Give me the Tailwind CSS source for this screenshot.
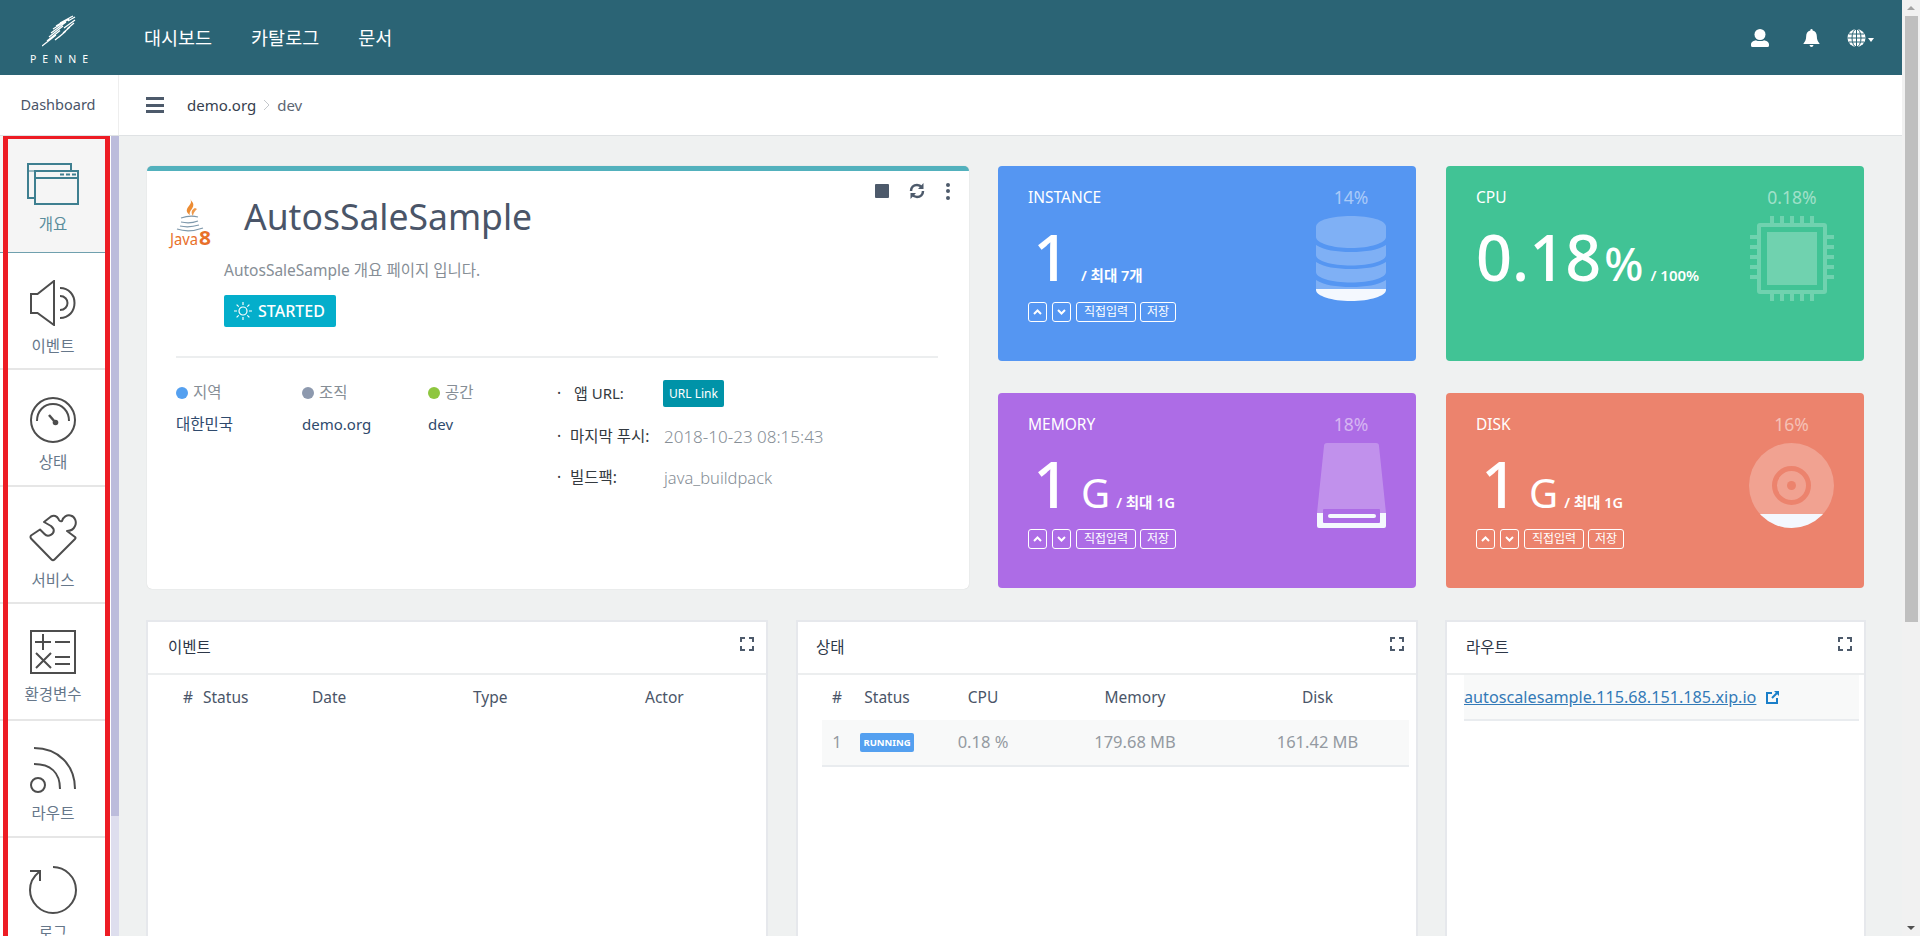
<!DOCTYPE html>
<html lang="ko">
<head>
  <meta charset="UTF-8" />
  <meta name="viewport" content="width=device-width, initial-scale=1.0"/>
  <title>PENNE Dashboard</title>
  <script src="https://cdn.jsdelivr.net/npm/@tailwindcss/browser@4"></script>
</head>
<body class="h-screen overflow-hidden flex bg-[#eff1f1] text-[#4a5568] font-['Noto_Sans','Noto_Sans_CJK_KR',sans-serif]">
  <div class="flex-1 min-w-0 flex flex-col">
    <!-- top nav -->
    <header class="h-[75px] shrink-0 bg-[#2b6475] text-white flex items-center">
      <div class="w-[118px] shrink-0 flex flex-col items-center pt-[3px]">
        <svg class="w-[34px] h-[32px]" viewBox="0 0 34 32" fill="none" stroke="#fff" stroke-width="1.300">
          <path d="M0 31L14 20M5 26L18 15.500M7 22L21 11M9 18L24 7M11 14L27 4M14 11L29 2M18 8L31 1M13 25L20 19.500M17 22L24 16M21 18L28 12M25 14L32 8M22 13L33 5M26 6L33 2"/>
        </svg>
        <span class="text-[10.500px] leading-[10px] tracking-[6px] mt-[7px] pl-[6px]">PENNE</span>
      </div>
      <nav class="flex gap-[39px] pl-[26px] text-[18.500px]">
        <a>대시보드</a>
        <a>카탈로그</a>
        <a>문서</a>
      </nav>
      <div class="ml-auto flex items-center pr-[28px]">
        <svg class="w-[18px] h-[18px] mr-[34px]" viewBox="0 0 18 18" fill="#fff"><circle cx="9" cy="5.500" r="5.500"/><path d="M0 15.500C0 12.500 3 11.500 5 11.200C7 12.400 11 12.400 13 11.200C15 11.500 18 12.500 18 15.500V16.500Q18 18 16.500 18H1.500Q0 18 0 16.500Z"/></svg>
        <svg class="w-[17px] h-[18px] mr-[27px]" viewBox="0 0 16 18" fill="#fff"><path d="M8 0Q9.200 0 9.200 1.400C12 2 13.300 4.200 13.300 7C13.300 11 14.500 12.500 16 14.500V15H0V14.500C1.500 12.500 2.700 11 2.700 7C2.700 4.200 4 2 6.800 1.400Q6.800 0 8 0Z"/><path d="M6 16H10Q9.600 18 8 18T6 16Z"/></svg>
        <svg class="w-[19px] h-[18px]" viewBox="0 0 18 18" fill="#fff" stroke="#2b6475" stroke-width="1"><circle cx="9" cy="9" r="9" stroke="none"/><path d="M9 0V18M0 9H18M1.500 5H16.500M1.500 13H16.500" fill="none"/><ellipse cx="9" cy="9" rx="4.500" ry="9" fill="none"/></svg>
        <span class="ml-[2px] mt-[5px] w-0 h-0 border-x-[3.500px] border-x-transparent border-t-[4px] border-t-white"></span>
      </div>
    </header>

    <!-- breadcrumb bar -->
    <div class="h-[61px] shrink-0 bg-white border-b border-[#dfe2e4] flex items-center text-[15px]">
      <div class="w-[119px] h-full shrink-0 border-r border-[#eeeeee] flex items-center justify-center pr-[2px] text-[14.500px]">Dashboard</div>
      <div class="ml-[27px] w-[18px] flex flex-col gap-[3.500px]">
        <span class="h-[3px] bg-[#4d5a6b]"></span>
        <span class="h-[3px] bg-[#4d5a6b]"></span>
        <span class="h-[3px] bg-[#4d5a6b]"></span>
      </div>
      <span class="ml-[23px] text-[#36404e]">demo.org</span>
      <svg class="w-[7px] h-[12px] mx-[7px]" viewBox="0 0 7 12" fill="none" stroke="#c4c8cc"><path d="M1 1L6 6L1 11"/></svg>
      <span class="text-[#5c6673]">dev</span>
    </div>

    <div class="flex-1 min-h-0 flex">
      <!-- side menu -->
      <aside class="relative w-[119px] shrink-0 bg-white flex overflow-hidden text-[15.500px] text-[#66778a]">
        <div class="w-[111px] shrink-0 pr-[5px]">
          <a class="h-[117px] flex flex-col items-center justify-start pt-[27px] bg-[#f5f5f5] border-b border-[#6fa0ae] text-[#5a8d9c]">
            <svg class="w-[52px] h-[42px]" viewBox="0 0 52 42" fill="#f5f5f5" stroke="#3e7f90" stroke-width="2">
              <path d="M1 1H44V35H1Z"/><path d="M1 8H44" stroke-width="1"/>
              <path d="M8 8H51V41H8Z"/><path d="M8 15H51"/>
              <path d="M33 11.500H37M39 11.500H43M45 11.500H49" stroke-width="2"/>
            </svg>
            <span class="mt-[9px] leading-[20px]">개요</span>
          </a>
          <a class="h-[117px] flex flex-col items-center pt-[27px] border-b-2 border-[#e6e6e6]">
            <svg class="w-[46px] h-[46px]" viewBox="0 0 46 46" fill="none" stroke="#4d4d4d" stroke-width="2"><path d="M1 14V33H7.500L24 45V1L7.500 14Z"/><path d="M30 16C35 16 37.500 19.500 37.500 23S35 30 30 30"/><path d="M30 8C39 8 44.500 15 44.500 23S39 38 30 38"/></svg>
            <span class="mt-[10px] leading-[20px]">이벤트</span>
          </a>
          <a class="h-[117px] flex flex-col items-center pt-[27px] border-b-2 border-[#e6e6e6]">
            <svg class="w-[46px] h-[46px]" viewBox="0 0 46 46" fill="none" stroke="#4d4d4d" stroke-width="2"><circle cx="23" cy="23" r="22"/><path d="M7 24C7 14 14 7 23 7S39 14 39 24"/><path d="M19 18L25 25" stroke-width="2.500"/><circle cx="25.500" cy="25.500" r="2.800" fill="#4d4d4d" stroke="none"/></svg>
            <span class="mt-[9px] leading-[20px]">상태</span>
          </a>
          <a class="h-[117px] flex flex-col items-center pt-[27px] border-b-2 border-[#e6e6e6]">
            <svg class="w-[48px] h-[48px]" viewBox="0 0 48 48" fill="none" stroke="#4d4d4d" stroke-width="2" stroke-linejoin="round"><path d="M2 21.500L11 15.500L15.500 20C19 24 26 20 24.500 15Q24 14 22 12L15 8L22 2.500C25 1 28 2 29.500 5Q30.500 8 33 7C34 3 38 .5 41.500 1.500C46 2.500 48 8 46 12C44.500 15.500 41 17 38 17L46 23Q47 24 46 25L25.500 45.500Q24 47 22.500 45.500L2 24.500Q1 23 2 21.500Z"/></svg>
            <span class="mt-[8px] leading-[20px]">서비스</span>
          </a>
          <a class="h-[117px] flex flex-col items-center pt-[26px] border-b-2 border-[#e6e6e6]">
            <svg class="w-[46px] h-[44px]" viewBox="0 0 46 44" fill="none" stroke="#4d4d4d" stroke-width="2"><path d="M1 1H45V43H1Z"/><path d="M5 12H21M13 4V20M25 12H40M6 23L21 38M21 23L6 38M25 27H40M25 34H40"/></svg>
            <span class="mt-[10px] leading-[20px]">환경변수</span>
          </a>
          <a class="h-[117px] flex flex-col items-center pt-[26px] border-b-2 border-[#e6e6e6]">
            <svg class="w-[46px] h-[46px]" viewBox="0 0 46 46" fill="none" stroke="#4d4d4d" stroke-width="2"><circle cx="8" cy="38" r="7"/><path d="M4 17C20 17 30 25 30 42"/><path d="M4 1C28 1 45 18 45 42"/></svg>
            <span class="mt-[10px] leading-[20px]">라우트</span>
          </a>
          <a class="h-[117px] flex flex-col items-center pt-[27px]">
            <svg class="w-[48px] h-[50px]" viewBox="0 0 48 50" fill="none" stroke="#4d4d4d" stroke-width="2"><path d="M24 2C36 2 47 12 47 25S36 48 24 48S1 38 1 25C1 17 5 11 10 7"/><path d="M1 6H11V16"/></svg>
            <span class="mt-[7px] leading-[20px]">로그</span>
          </a>
        </div>
        <div class="w-[8px] shrink-0 bg-[#dedeee]"><div class="h-[680px] bg-[#bcbcdc]"></div></div>
        <!-- red highlight drawn over the menu -->
        <div class="absolute left-[3px] top-[-2px] bottom-[-20px] w-[107px] border-[5px] border-[#ed1c24]"></div>
      </aside>

      <main class="flex-1 min-w-0 overflow-hidden pt-[30px] pl-[27px]">
        <div class="flex pl-[1px] gap-[29px]">
          <!-- app card -->
          <section class="w-[822px] h-[423px] shrink-0 relative bg-white rounded-[5px] border-t-[5px] border-[#52b1bd] shadow-[0_0_1px_rgba(0,0,0,0.2)]">
            <div class="absolute right-[19px] top-[11px] flex items-center">
              <span class="w-[14px] h-[14px] rounded-[1px] bg-[#4d5a6b]"></span>
              <svg class="w-[18px] h-[18px] ml-[19px]" viewBox="0 0 18 18" fill="none" stroke="#4d5a6b" stroke-width="2.500"><path d="M3 9C3 5.500 5.500 3 9 3Q12 3 14 5.500"/><path d="M15 9C15 12.500 12.500 15 9 15Q6 15 4 12.500"/><path d="M15.500 1V7H10" fill="#4d5a6b" stroke="none"/><path d="M2.500 17V11H8" fill="#4d5a6b" stroke="none"/></svg>
              <span class="ml-[20px] flex flex-col gap-[2.500px]">
                <span class="w-[4px] h-[4px] rounded-full bg-[#4d5a6b]"></span>
                <span class="w-[4px] h-[4px] rounded-full bg-[#4d5a6b]"></span>
                <span class="w-[4px] h-[4px] rounded-full bg-[#4d5a6b]"></span>
              </span>
            </div>
            <div class="flex h-[50px] box-content pl-[23px] pt-[24px]">
              <svg class="w-[42px] h-[50px] mt-[4px] shrink-0 overflow-visible" viewBox="0 0 42 50" fill="none">
                <path d="M20 0C24 5 15 8 17 13C18 15 20 16 20 16C18 12 25 9 23 4Z" fill="#e76f00" opacity=".8"/>
                <path d="M25 9C21 11 21 14 23 17C23 14 25 12 27 10Z" fill="#e76f00" opacity=".7"/>
                <path d="M11 19Q20 16 28 18M11 23Q20 25 28 22M10 27Q19 29 29 26M7 30Q19 34 33 29" stroke="#7e98ab" stroke-width="1.200"/>
                <text x="0" y="46" font-size="16" fill="#e8702a" textLength="28" lengthAdjust="spacingAndGlyphs">Java</text>
                <text x="29" y="46" font-size="19" font-weight="700" fill="#e8702a" textLength="12" lengthAdjust="spacingAndGlyphs">8</text>
              </svg>
              <h1 class="ml-[32px] -mt-[4px] text-[35.500px] leading-[50px] text-[#4a5568]">AutosSaleSample</h1>
            </div>
            <div class="pl-[77px]">
              <p class="mt-[14px] text-[15.500px] leading-[22px] text-[#868e96]">AutosSaleSample 개요 페이지 입니다.</p>
              <span class="mt-[14px] w-[112px] h-[32px] rounded-[2px] bg-[#04aecb] text-white text-[16px] font-medium flex items-center pl-[10px]">
                <svg class="w-[18px] h-[18px] mr-[6px]" viewBox="0 0 18 18" fill="none" stroke="#fff" stroke-width="1.200"><circle cx="9" cy="9" r="4"/><path d="M9 0V3M9 15V18M0 9H3M15 9H18M2.600 2.600L4.700 4.700M13.300 13.300L15.400 15.400M2.600 15.400L4.700 13.300M13.300 4.700L15.400 2.600"/></svg>
                STARTED
              </span>
            </div>
            <div class="ml-[29px] mr-[31px] mt-[29px] border-t-2 border-[#eceeef]"></div>
            <div class="flex pl-[29px] pt-[25px] text-[15.500px]">
              <div class="w-[126px]">
                <div class="flex items-center h-[20px] text-[#868e96]"><span class="w-[12px] h-[12px] rounded-full bg-[#54a0f0] mr-[5px]"></span>지역</div>
                <div class="mt-[11px] leading-[20px] text-[#2f4a6d]">대한민국</div>
              </div>
              <div class="w-[126px]">
                <div class="flex items-center h-[20px] text-[#868e96]"><span class="w-[12px] h-[12px] rounded-full bg-[#8d99ae] mr-[5px]"></span>조직</div>
                <div class="mt-[11px] leading-[20px] text-[#2f4a6d] text-[15px]">demo.org</div>
              </div>
              <div class="w-[129px]">
                <div class="flex items-center h-[20px] text-[#868e96]"><span class="w-[12px] h-[12px] rounded-full bg-[#8ec63f] mr-[5px]"></span>공간</div>
                <div class="mt-[11px] leading-[20px] text-[#2f4a6d] text-[15px]">dev</div>
              </div>
              <div class="text-[#343a40] -mt-[3px]">
                <div class="flex items-center h-[27px]">
                  <span class="w-[17px]">·</span><span class="w-[89px] text-[15px]">앱 URL:</span>
                  <span class="w-[61px] h-[27px] rounded-[2px] bg-[#0093a8] text-white text-[12px] flex items-center justify-center">URL Link</span>
                </div>
                <div class="flex items-center h-[20px] mt-[20px]">
                  <span class="w-[13px]">·</span><span class="w-[94px]">마지막 푸시:</span>
                  <span class="text-[#868e96] text-[17px] font-light">2018-10-23 08:15:43</span>
                </div>
                <div class="flex items-center h-[20px] mt-[21px]">
                  <span class="w-[13px]">·</span><span class="w-[94px]">빌드팩:</span>
                  <span class="text-[#868e96] text-[16.500px] font-light">java_buildpack</span>
                </div>
              </div>
            </div>
          </section>

          <!-- resource tiles -->
          <div class="grid grid-cols-[418px_418px] grid-rows-[195px_195px] gap-x-[30px] gap-y-[32px] text-white">
            <section class="rounded-[4px] bg-[#5596f2] pl-[30px] pr-[30px] pt-[20px] flex justify-between">
              <div>
                <h3 class="text-[15.500px] leading-[22px]">INSTANCE</h3>
                <div class="flex items-baseline h-[68px] mt-[13px]">
                  <span class="text-[64px] leading-[72px] font-medium w-[53px] pl-[5px]">1</span>
                  <span class="text-[14.500px] font-semibold">/ 최대 7개</span>
                </div>
                <div class="flex gap-[5px] mt-[13px] text-[12px] leading-[18px]">
                  <button class="w-[19px] h-[20px] border border-white rounded-[3px] flex items-center justify-center"><svg class="w-[9px] h-[6px]" viewBox="0 0 9 6" fill="none" stroke="#fff" stroke-width="2"><path d="M1 5L4.500 1.500L8 5"/></svg></button>
                  <button class="w-[19px] h-[20px] border border-white rounded-[3px] flex items-center justify-center"><svg class="w-[9px] h-[6px]" viewBox="0 0 9 6" fill="none" stroke="#fff" stroke-width="2"><path d="M1 1L4.500 4.500L8 1"/></svg></button>
                  <button class="w-[60px] h-[20px] border border-white rounded-[3px]">직접입력</button>
                  <button class="w-[36px] h-[20px] border border-white rounded-[3px] -ml-[1px]">저장</button>
                </div>
              </div>
              <div class="flex flex-col items-center w-[70px]">
                <span class="text-[17.500px] leading-[22px] text-white/50">14%</span>
                <svg class="w-[70px] h-[85px] mt-[8px]" viewBox="0 0 70 85">
                  <clipPath id="dbTop"><rect width="70" height="73"/></clipPath>
                  <clipPath id="dbFill"><rect y="73" width="70" height="12"/></clipPath>
                  <g clip-path="url(#dbTop)" fill="#fff" fill-opacity=".25">
                    <path d="M0 11C0 4 16 0 35 0S70 4 70 11V21C70 27 54 32 35 32S0 27 0 21Z"/>
                    <path d="M0 29C8 34 20 36 35 36S62 34 70 29V39C70 45 54 49.500 35 49.500S0 45 0 39Z"/>
                    <path d="M0 46C8 51 20 53 35 53S62 51 70 46V56C70 62 54 66.500 35 66.500S0 62 0 56Z"/>
                    <path d="M0 64C8 69 20 71 35 71S62 69 70 64V74C70 80 54 85 35 85S0 80 0 74Z"/>
                  </g>
                  <path clip-path="url(#dbFill)" fill="#f4f8fe" d="M0 64C8 69 20 71 35 71S62 69 70 64V74C70 80 54 85 35 85S0 80 0 74Z"/>
                </svg>
              </div>
            </section>

            <section class="rounded-[4px] bg-[#41c395] pl-[30px] pr-[30px] pt-[20px] flex justify-between">
              <div>
                <h3 class="text-[15.500px] leading-[22px]">CPU</h3>
                <div class="flex items-baseline h-[68px] mt-[13px]">
                  <span class="text-[63px] leading-[72px] font-medium">0.18</span>
                  <span class="text-[46px] leading-[72px] font-medium ml-[3px] mr-[7px]">%</span>
                  <span class="text-[15px] font-semibold">/ 100%</span>
                </div>
              </div>
              <div class="flex flex-col items-center w-[84px]">
                <span class="text-[17.500px] leading-[22px] text-white/50">0.18%</span>
                <svg class="w-[84px] h-[85px] mt-[8px]" viewBox="0 0 84 85" fill="#fff" fill-opacity=".25">
                  <path fill-rule="evenodd" d="M10 7H74Q77 7 77 10V75Q77 78 74 78H10Q7 78 7 75V10Q7 7 10 7ZM11 11V74H73V11Z"/>
                  <rect x="17" y="16" width="50" height="53"/>
                  <path d="M20 0H24V7H20ZM30 0H34V7H30ZM40 0H44V7H40ZM50 0H54V7H50ZM60 0H64V7H60ZM20 78H24V85H20ZM30 78H34V85H30ZM40 78H44V85H40ZM50 78H54V85H50ZM60 78H64V85H60ZM0 19H7V23H0ZM0 29H7V33H0ZM0 39H7V43H0ZM0 49H7V53H0ZM0 59H7V63H0ZM77 19H84V23H77ZM77 29H84V33H77ZM77 39H84V43H77ZM77 49H84V53H77ZM77 59H84V63H77Z"/>
                </svg>
              </div>
            </section>

            <section class="rounded-[4px] bg-[#ad6ce6] pl-[30px] pr-[30px] pt-[20px] flex justify-between">
              <div>
                <h3 class="text-[15.500px] leading-[22px]">MEMORY</h3>
                <div class="flex items-baseline h-[68px] mt-[13px]">
                  <span class="text-[64px] leading-[72px] font-medium w-[53px] pl-[5px]">1</span>
                  <span class="text-[40px] leading-[72px] mr-[6px]">G</span>
                  <span class="text-[14.500px] font-semibold">/ 최대 1G</span>
                </div>
                <div class="flex gap-[5px] mt-[13px] text-[12px] leading-[18px]">
                  <button class="w-[19px] h-[20px] border border-white rounded-[3px] flex items-center justify-center"><svg class="w-[9px] h-[6px]" viewBox="0 0 9 6" fill="none" stroke="#fff" stroke-width="2"><path d="M1 5L4.500 1.500L8 5"/></svg></button>
                  <button class="w-[19px] h-[20px] border border-white rounded-[3px] flex items-center justify-center"><svg class="w-[9px] h-[6px]" viewBox="0 0 9 6" fill="none" stroke="#fff" stroke-width="2"><path d="M1 1L4.500 4.500L8 1"/></svg></button>
                  <button class="w-[60px] h-[20px] border border-white rounded-[3px]">직접입력</button>
                  <button class="w-[36px] h-[20px] border border-white rounded-[3px] -ml-[1px]">저장</button>
                </div>
              </div>
              <div class="flex flex-col items-center w-[70px]">
                <span class="text-[17.500px] leading-[22px] text-white/50">18%</span>
                <svg class="w-[69px] h-[85px] mt-[8px]" viewBox="0 0 69 85">
                  <path fill="#fff" fill-opacity=".25" d="M7 3Q7 0 10 0H59Q62 0 62 3L69 70H0Z"/>
                  <path fill="#f4f8fe" d="M0 70H69V83Q69 85 67 85H2Q0 85 0 83Z"/>
                  <rect x="6" y="66" width="57" height="14" rx="1" fill="#ad6ce6"/>
                  <rect x="11" y="71" width="48" height="4" rx="2" fill="#f4f8fe"/>
                </svg>
              </div>
            </section>

            <section class="rounded-[4px] bg-[#ec836d] pl-[30px] pr-[30px] pt-[20px] flex justify-between">
              <div>
                <h3 class="text-[15.500px] leading-[22px]">DISK</h3>
                <div class="flex items-baseline h-[68px] mt-[13px]">
                  <span class="text-[64px] leading-[72px] font-medium w-[53px] pl-[5px]">1</span>
                  <span class="text-[40px] leading-[72px] mr-[6px]">G</span>
                  <span class="text-[14.500px] font-semibold">/ 최대 1G</span>
                </div>
                <div class="flex gap-[5px] mt-[13px] text-[12px] leading-[18px]">
                  <button class="w-[19px] h-[20px] border border-white rounded-[3px] flex items-center justify-center"><svg class="w-[9px] h-[6px]" viewBox="0 0 9 6" fill="none" stroke="#fff" stroke-width="2"><path d="M1 5L4.500 1.500L8 5"/></svg></button>
                  <button class="w-[19px] h-[20px] border border-white rounded-[3px] flex items-center justify-center"><svg class="w-[9px] h-[6px]" viewBox="0 0 9 6" fill="none" stroke="#fff" stroke-width="2"><path d="M1 1L4.500 4.500L8 1"/></svg></button>
                  <button class="w-[60px] h-[20px] border border-white rounded-[3px]">직접입력</button>
                  <button class="w-[36px] h-[20px] border border-white rounded-[3px] -ml-[1px]">저장</button>
                </div>
              </div>
              <div class="flex flex-col items-center w-[85px]">
                <span class="text-[17.500px] leading-[22px] text-white/50">16%</span>
                <svg class="w-[85px] h-[85px] mt-[8px]" viewBox="0 0 85 85">
                  <clipPath id="diskFill"><rect y="71" width="85" height="14"/></clipPath>
                  <circle cx="42.500" cy="42.500" r="42.500" fill="#fff" fill-opacity=".25"/>
                  <circle cx="42.500" cy="42.500" r="42.500" fill="#f4f8fe" clip-path="url(#diskFill)"/>
                  <circle cx="42.500" cy="42.500" r="17" fill="none" stroke="#ec836d" stroke-width="5"/>
                  <circle cx="42.500" cy="42.500" r="4.500" fill="#ec836d"/>
                </svg>
              </div>
            </section>
          </div>
        </div>

        <!-- lower panels -->
        <div class="flex mt-[31px] h-[400px]">
          <section class="w-[622px] shrink-0 bg-white border-2 border-[#e6e8ec]">
            <div class="relative h-[53px] border-b-2 border-[#eceeef] flex items-center pl-[20px] text-[15.500px] text-[#2d3748]">
              이벤트
              <svg class="absolute right-[12px] top-[15px] w-[14px] h-[14px]" viewBox="0 0 14 14" fill="none" stroke="#4d5a6b" stroke-width="2"><path d="M1 5V1H5M9 1H13V5M13 9V13H9M5 13H1V9"/></svg>
            </div>
            <div class="grid grid-cols-[20px_109px_161px_172px_1fr] h-[45px] items-center text-[15.500px] pl-[35px] text-[#4a5568]">
              <span>#</span><span>Status</span><span>Date</span><span>Type</span><span>Actor</span>
            </div>
          </section>

          <section class="w-[622px] shrink-0 ml-[28px] bg-white border-2 border-[#e6e8ec]">
            <div class="relative h-[53px] border-b-2 border-[#eceeef] flex items-center pl-[18px] text-[15.500px] text-[#2d3748]">
              상태
              <svg class="absolute right-[12px] top-[15px] w-[14px] h-[14px]" viewBox="0 0 14 14" fill="none" stroke="#4d5a6b" stroke-width="2"><path d="M1 5V1H5M9 1H13V5M13 9V13H9M5 13H1V9"/></svg>
            </div>
            <div class="ml-[24px] mr-[7px] text-[15.500px]">
              <div class="grid grid-cols-[30px_70px_122px_182px_183px] h-[45px] items-center text-center text-[#4a5568]">
                <span>#</span><span>Status</span><span>CPU</span><span>Memory</span><span>Disk</span>
              </div>
              <div class="grid grid-cols-[30px_70px_122px_182px_183px] h-[47px] items-center text-center bg-[#f8f9f9] border-b-2 border-[#e9ecef] text-[#949aa1] text-[16.500px]">
                <span>1</span>
                <span class="w-[54px] h-[19px] mx-auto rounded-[2px] bg-[#54a0f0] text-white text-[9.500px] font-bold leading-[19px]">RUNNING</span>
                <span>0.18 %</span><span>179.68 MB</span><span>161.42 MB</span>
              </div>
            </div>
          </section>

          <section class="w-[421px] shrink-0 ml-[27px] bg-white border-2 border-[#e6e8ec]">
            <div class="relative h-[53px] border-b-2 border-[#eceeef] flex items-center pl-[19px] text-[15.500px] text-[#2d3748]">
              라우트
              <svg class="absolute right-[12px] top-[15px] w-[14px] h-[14px]" viewBox="0 0 14 14" fill="none" stroke="#4d5a6b" stroke-width="2"><path d="M1 5V1H5M9 1H13V5M13 9V13H9M5 13H1V9"/></svg>
            </div>
            <div class="ml-[17px] mr-[5px] h-[46px] bg-[#f8f9f9] border-b-2 border-[#e9ecef] flex items-center text-[16.200px]">
              <a class="underline text-[#337ab7]">autoscalesample.115.68.151.185.xip.io</a>
              <svg class="ml-[10px] w-[13px] h-[13px]" viewBox="0 0 13 13" fill="none" stroke="#1a7fc9" stroke-width="2"><path d="M6 2H1V12H11V7"/><path d="M6 7L11.500 1.500"/><path d="M8 0H13V5Z" fill="#1a7fc9" stroke="none"/></svg>
            </div>
          </section>
        </div>
      </main>
    </div>
  </div>

  <!-- window scrollbar -->
  <div class="w-[18px] shrink-0 bg-[#f1f1f1] flex flex-col items-center">
    <span class="mt-[6px] w-0 h-0 border-x-[4px] border-x-transparent border-b-[4px] border-b-[#a3a3a3]"></span>
    <div class="mt-[6px] h-[606px] w-[13px] bg-[#bfbfbf]"></div>
    <span class="mt-auto mb-[6px] w-0 h-0 border-x-[4px] border-x-transparent border-t-[4px] border-t-[#505050]"></span>
  </div>
</body>
</html>
